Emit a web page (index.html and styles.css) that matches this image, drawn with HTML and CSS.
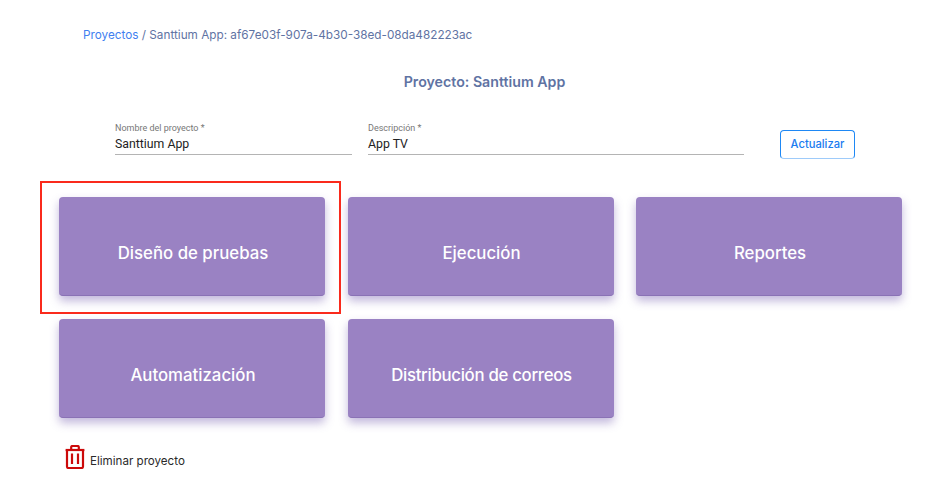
FILE: index.html
```html
<!DOCTYPE html>
<html lang="es">
<head>
<meta charset="utf-8">
<title>Proyecto: Santtium App</title>
<link rel="stylesheet" href="styles.css">
</head>
<body>
<main class="page">
  <nav class="crumbs"><a class="crumb-link" href="#">Proyectos</a> / Santtium App: af67e03f-907a-4b30-38ed-08da482223ac</nav>
  <h1 class="title">Proyecto: Santtium App</h1>
  <form class="form">
    <label class="field field-name">
      <span class="field-label">Nombre del proyecto *</span>
      <span class="field-value">Santtium App</span>
    </label>
    <label class="field field-desc">
      <span class="field-label">Descripción *</span>
      <span class="field-value">App TV</span>
    </label>
    <button class="update" type="button">Actualizar</button>
  </form>
  <section class="cards">
    <a class="card card-marked" href="#">Diseño de pruebas</a>
    <a class="card" href="#">Ejecución</a>
    <a class="card" href="#">Reportes</a>
    <a class="card" href="#">Automatización</a>
    <a class="card card-long" href="#">Distribución de correos</a>
  </section>
  <div class="delete">
    <svg class="trash" width="20" height="24" viewBox="0 0 20 24" fill="none" stroke="#cc0a0a" stroke-width="2.2">
      <path d="M.6 5h18.8" />
      <path d="M6.2 5V2.2c0-.7.5-1.2 1.2-1.2h5.2c.7 0 1.2.5 1.2 1.2V5" />
      <path d="M2 5v16.4c0 .9.6 1.6 1.5 1.6h13c.9 0 1.5-.7 1.5-1.6V5" />
      <path d="M7 8.5v10.5M13 8.5v10.5" />
    </svg>
    <span class="delete-text">Eliminar proyecto</span>
  </div>
</main>
</body>
</html>
```
FILE: styles.css
```css
*, *::after { box-sizing: border-box; }
html, body { margin: 0; background: #fff; }
body { font-family: Inter, "Liberation Sans", sans-serif; width: 936px; height: 504px; overflow: hidden; }
.page { padding: 27px 34px 0 59px; }
.crumbs { margin-left: 24px; height: 16px; font-size: 11.76px; line-height: 16px; color: #5f73a3; }
.crumb-link { color: #3f7ff0; text-decoration: none; }
.title { margin: 23px 0 0; height: 32px; padding-left: 8px; text-align: center; font-size: 14.2px; line-height: 32px; font-weight: 600; color: #5f73a3; }
.form { display: flex; align-items: flex-start; margin: 20px 0 0 56px; height: 79px; }
.field { display: flex; flex-direction: column; padding-top: 5px; border-bottom: 1px solid #b4b4b4; height: 37px; }
.field-name { width: 237px; margin-right: 16px; }
.field-desc { width: 376px; margin-right: 36px; }
.field-label { font-family: Roboto, sans-serif; font-size: 9px; line-height: 11px; color: #777; }
.field-value { font-family: Roboto, sans-serif; margin-top: 1px; font-size: 12.3px; line-height: 18px; color: #222; }
.update { width: 75px; height: 29px; margin-top: 12px; padding: 0; border: 1px solid #1e88f5; border-bottom-color: #9ecbfa; border-radius: 4px; background: #fff; color: #1a7cf0; font: 500 11.2px/1 Inter, sans-serif; }
.cards { display: grid; grid-template-columns: repeat(3, 266px); grid-auto-rows: 99px; gap: 23px 22.5px; }
.card { position: relative; display: flex; align-items: center; justify-content: center; padding: 13px 0 0 2px; border-radius: 4px; background: #9a82c3; border-bottom: 1px solid #8a72b5; box-shadow: 0 5px 10px rgba(103, 78, 167, .4); color: #fff; font-size: 16.8px; font-weight: 500; text-decoration: none; }
.card-long { letter-spacing: -.3px; }
.card-marked::after { content: ""; position: absolute; left: -19px; top: -16px; width: 301px; height: 133px; border: 2px solid #fa2a1c; }
.delete { display: flex; align-items: flex-end; gap: 5px; margin: 27px 0 0 6px; }
.delete-text { font-size: 11.6px; line-height: 14px; color: #2a2a2a; margin-bottom: 1px; }
```
